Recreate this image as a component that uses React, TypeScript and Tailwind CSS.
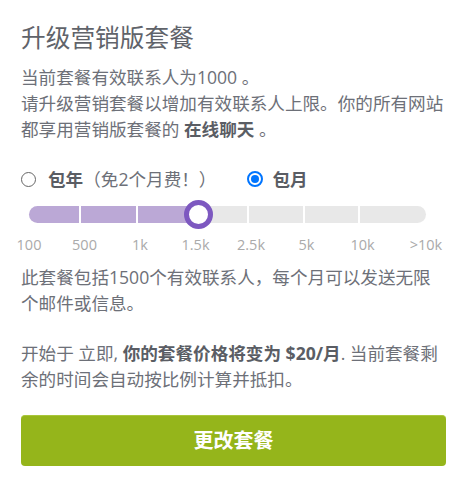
import React from 'react';

const ticks = [
  { label: '100', left: 0 },
  { label: '500', left: 55.5 },
  { label: '1k', left: 111 },
  { label: '1.5k', left: 166.5 },
  { label: '2.5k', left: 222 },
  { label: '5k', left: 277.5 },
  { label: '10k', left: 333.5 },
  { label: '>10k', left: 397 },
];

// widths of the slider segments, between the tick marks
const segments = [50, 55, 54, 53, 54, 53, 66];
const filled = 3;

const Radio = ({ checked }: { checked: boolean }) =>
  checked ? (
    <span className="w-4 h-4 rounded-full border-2 border-[#0075ff] flex items-center justify-center shrink-0">
      <span className="w-2 h-2 rounded-full bg-[#0075ff]" />
    </span>
  ) : (
    <span className="w-[15px] h-[15px] rounded-full border border-[#666] bg-white shrink-0" />
  );

const App: React.FC = () => {
  return (
    <div
      className="bg-white w-[461px] h-[490px] pl-[21px] pt-[22px] text-[#6d7078]"
      style={{ fontFamily: '"Open Sans", "Noto Sans CJK SC", sans-serif' }}
    >
      <div className="w-[424px]">
        {/* Title */}
        <h2 className="text-[24.7px] leading-8 text-[#60636a]">升级营销版套餐</h2>

        {/* Current plan */}
        <p className="mt-[10px] text-[17.6px] leading-[26px]">
          当前套餐有效联系人为1000 。
          <br />
          请升级营销套餐以增加有效联系人上限。你的所有网站都享用营销版套餐的{' '}
          <b className="font-bold text-[#5a5d64]">在线聊天</b> 。
        </p>

        {/* Billing period */}
        <div className="mt-[24px] flex items-center text-[17.6px] leading-[26px]">
          <label className="flex items-center">
            <Radio checked={false} />
            <b className="ml-3 font-bold text-[#5a5d64]">包年</b>
            <span>（免2个月费！）</span>
          </label>
          <label className="ml-[31px] flex items-center">
            <Radio checked />
            <b className="ml-[9px] font-bold text-[#5a5d64]">包月</b>
          </label>
        </div>

        {/* Slider */}
        <div className="mt-[14px] ml-[8px] w-[397px] relative">
          <div className="flex gap-[2px] h-[17px]">
            {segments.map((w, i) => (
              <div
                key={i}
                style={{ width: w }}
                className={`h-full ${i < filled ? 'bg-[#bba8d6]' : 'bg-[#e8e8e8]'} ${
                  i === 0 ? 'rounded-l-full' : ''
                } ${i === segments.length - 1 ? 'rounded-r-full' : ''}`}
              />
            ))}
          </div>
          <div className="absolute left-[155px] top-[-6px] w-[29px] h-[29px] rounded-full border-[5px] border-[#7d58c0] bg-white" />
          <div className="relative h-5 mt-[12px] text-[14.5px] leading-5 text-[#aaaaaa]">
            {ticks.map((t) => (
              <span
                key={t.label}
                className="absolute top-0 -translate-x-1/2 whitespace-nowrap"
                style={{ left: t.left }}
              >
                {t.label}
              </span>
            ))}
          </div>
        </div>

        {/* Plan description */}
        <p className="mt-[9px] text-[17.6px] leading-[26px]">
          此套餐包括1500个有效联系人，每个月可以发送无限个邮件或信息。
        </p>
        <p className="mt-[24px] text-[17.6px] leading-[26px]">
          开始于 立即, <b className="font-bold text-[#5a5d64]">你的套餐价格将变为 $20/月</b>. 当前套餐剩余的时间会自动按比例计算并抵扣。
        </p>

        {/* Action */}
        <button className="mt-[23px] w-[425px] h-[51px] rounded-[4px] bg-[#95b51b] border-t border-[#a9c63a] text-white text-[20px] font-bold flex items-center justify-center">
          更改套餐
        </button>
      </div>
    </div>
  );
};

export default App;
